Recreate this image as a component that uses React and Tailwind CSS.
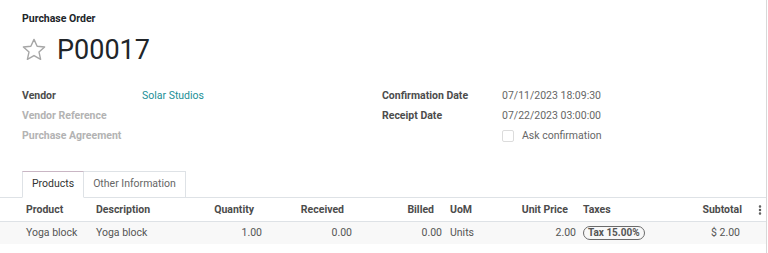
import { MoreVertical } from "lucide-react";

function StarOutline() {
  return (
    <svg width="26" height="26" viewBox="0 0 24 24" className="-ml-px shrink-0">
      <path
        d="M12 2.2l2.9 6.3 6.9.7-5.2 4.6 1.5 6.8L12 17.1l-6.1 3.5 1.5-6.8-5.2-4.6 6.9-.7z"
        fill="none"
        stroke="#a6a6a6"
        strokeWidth="1.3"
        strokeLinejoin="round"
      />
    </svg>
  );
}

function Field({ label, value, muted, link }) {
  return (
    <div className="flex h-5 items-center">
      <div
        className={
          "w-[120px] shrink-0 font-bold " +
          (muted ? "text-[#b3b3b3]" : "text-[#4c4c4c]")
        }
      >
        {label}
      </div>
      {value && (
        <div className={link ? "text-[#1a8f96]" : "text-[#666666]"}>{value}</div>
      )}
    </div>
  );
}

const columns = [
  { name: "Product", w: "w-[92px]", align: "left", hp: "pl-[26px]" },
  { name: "Description", w: "w-[84px]", align: "left", hp: "pl-1" },
  { name: "Quantity", w: "w-[90px]", align: "right", hp: "pr-3" },
  { name: "Received", w: "w-[90px]", align: "right", hp: "pr-3" },
  { name: "Billed", w: "w-[90px]", align: "right", hp: "pr-3" },
  { name: "UoM", w: "w-[64px]", align: "left", hp: "pl-1" },
  { name: "Unit Price", w: "w-[70px]", align: "right", hp: "pr-3" },
  { name: "Taxes", w: "w-[108px]", align: "left", hp: "pl-[3px]" },
  { name: "Subtotal", w: "w-[56px]", align: "right", hp: "pr-0.5" },
];

export default function App() {
  return (
    <div className="h-[253px] w-[767px] overflow-hidden border-r border-[#d8d8d8] bg-white font-['Roboto',sans-serif] text-[10.5px] text-[#444444]">
      <div className="px-[22px] pt-[11px]">
        <div className="text-[10.5px] font-bold text-[#212529]">Purchase Order</div>
        <div className="mt-[7px] flex items-center gap-[10px]">
          <StarOutline />
          <div className="text-[27px] leading-[32px] text-[#212529]">P00017</div>
        </div>

        <div className="mt-[20px] grid grid-cols-[360px_1fr]">
          <div>
            <Field label="Vendor" value="Solar Studios" link />
            <Field label="Vendor Reference" muted />
            <Field label="Purchase Agreement" muted />
          </div>
          <div>
            <Field label="Confirmation Date" value="07/11/2023 18:09:30" />
            <Field label="Receipt Date" value="07/22/2023 03:00:00" />
            <div className="flex h-5 items-center pl-[120px]">
              <span className="mr-2 h-[12px] w-[12px] rounded-[2px] border border-[#dcdcdc] bg-white" />
              <span className="text-[#666666]">Ask confirmation</span>
            </div>
          </div>
        </div>
      </div>

      <div className="mt-[25px] flex h-[27px] border-b border-[#dee2e6] pl-[22px]">
        <div className="-mb-px flex w-[62px] items-center justify-center border border-b-white border-[#dee2e6] border-t-[#c9b6c4] bg-white text-[#333333]">
          Products
        </div>
        <div className="-mb-px flex w-[102px] items-center justify-center border border-l-0 border-[#dee2e6] text-[#666666]">
          Other Information
        </div>
      </div>

      <table className="w-[766px] table-fixed border-collapse">
        <thead>
          <tr className="h-[24px] border-b border-[#dee2e6] shadow-[0_1px_2px_rgba(0,0,0,0.05)]">
            {columns.map((c) => (
              <th
                key={c.name}
                className={
                  c.w +
                  " " +
                  c.hp +
                  " font-bold text-[#4c4c4c] " +
                  (c.align === "right" ? "text-right" : "text-left")
                }
              >
                {c.name}
              </th>
            ))}
            <th className="w-[22px]">
              <MoreVertical size={12} strokeWidth={3} className="ml-[10px] text-[#555555]" />
            </th>
          </tr>
        </thead>
        <tbody>
          <tr className="h-[22px] bg-[#f8f8f8] text-[#555555]">
            <td className="pl-[26px]">Yoga block</td>
            <td className="pl-1">Yoga block</td>
            <td className="pr-1 text-right">1.00</td>
            <td className="pr-1 text-right">0.00</td>
            <td className="pr-1 text-right">0.00</td>
            <td className="pl-1">Units</td>
            <td className="pr-1 text-right">2.00</td>
            <td className="pl-[3px]">
              <span className="inline-flex h-[14px] items-center rounded-full border-[1.5px] border-[#6b6b6b] px-[4px] text-[10px] font-bold leading-none text-[#555555]">
                Tax 15.00%
              </span>
            </td>
            <td className="pr-1 text-right">$ 2.00</td>
            <td />
          </tr>
        </tbody>
      </table>
    </div>
  );
}
